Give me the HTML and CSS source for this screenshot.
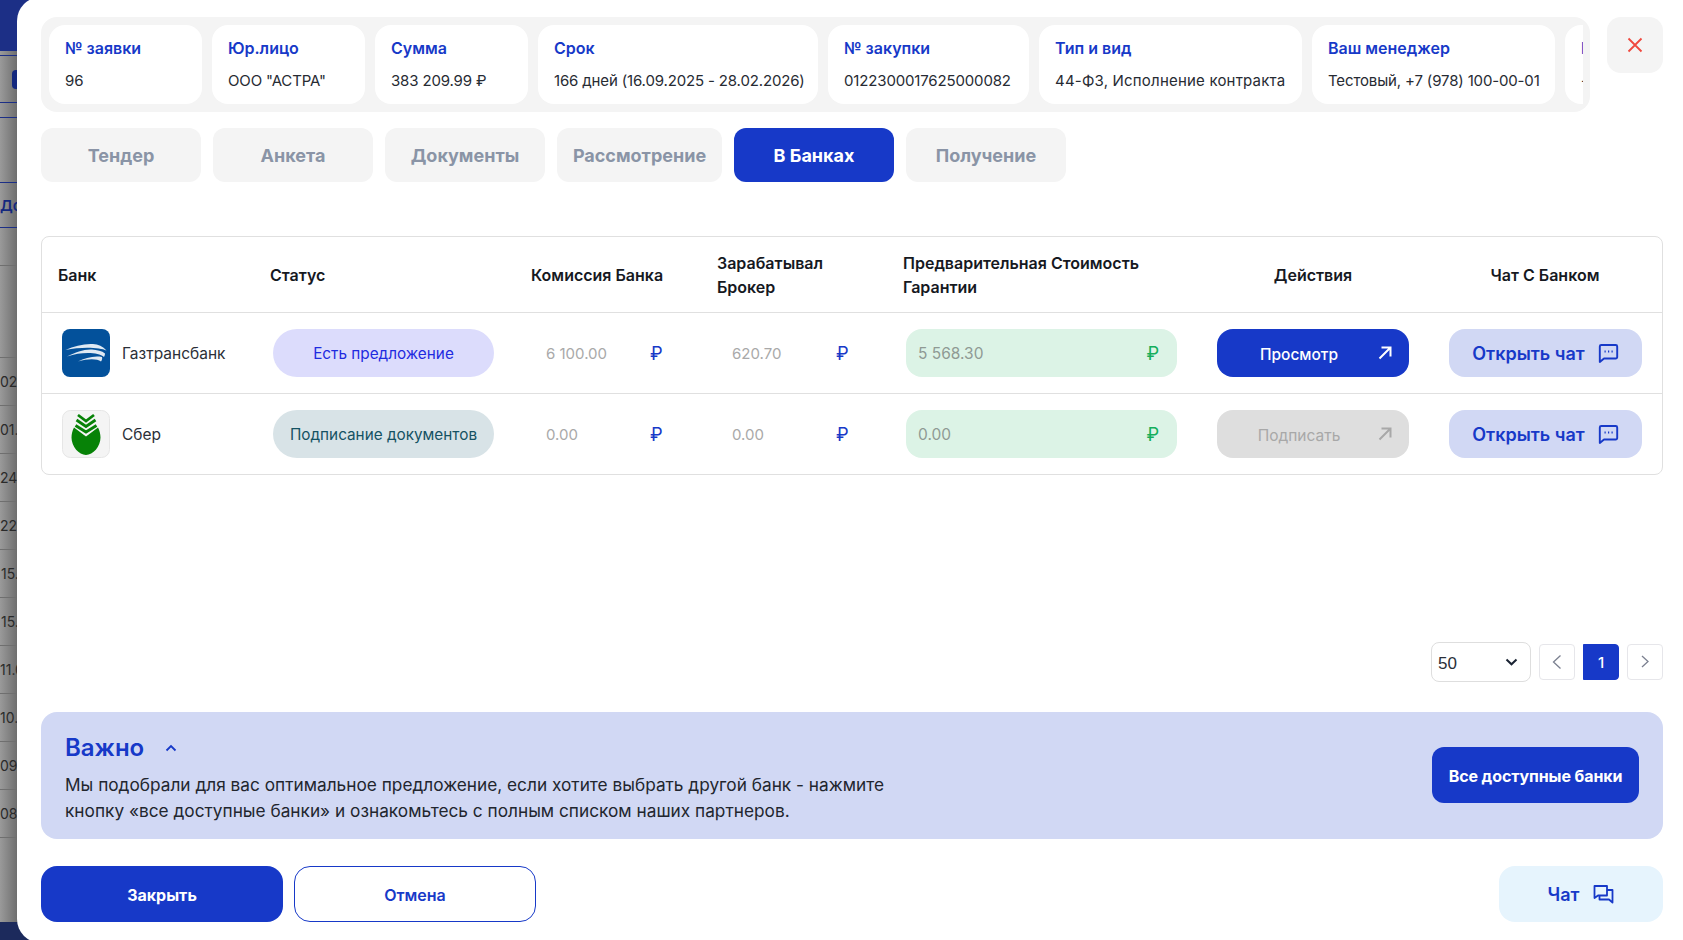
FILE: index.html
```html
<!DOCTYPE html>
<html lang="ru">
<head>
    <meta charset="UTF-8">
    <meta name="viewport" content="width=device-width, initial-scale=1.0">
    <title>Заявка 96</title>
    <link rel="stylesheet" href="styles.css">
</head>
<body>
    <!-- Page behind the modal -->
    <div class="backdrop">
        <div class="bd-top"></div>
        <div class="bd-toolbar"><span class="bd-chip"></span></div>
        <div class="bd-strip"></div>
        <div class="bd-head">До</div>
        <div class="bd-sub"></div>
        <div class="bd-spacer"></div>
        <div class="bd-row">02.</div>
        <div class="bd-row">01.1</div>
        <div class="bd-row">24.</div>
        <div class="bd-row">22.</div>
        <div class="bd-row bd-indent">15.</div>
        <div class="bd-row bd-indent">15.</div>
        <div class="bd-row">11.0</div>
        <div class="bd-row">10.</div>
        <div class="bd-row">09.</div>
        <div class="bd-row">08.</div>
        <div class="bd-rest"></div>
        <div class="bd-bottom"></div>
    </div>

    <div class="modal">
        <!-- Application info -->
        <div class="top-row">
            <div class="info-box">
                <div class="info-scroll">
                    <div class="info-card w153"><div class="info-title">№ заявки</div><div class="info-value">96</div></div>
                    <div class="info-card w153"><div class="info-title">Юр.лицо</div><div class="info-value">ООО "АСТРА"</div></div>
                    <div class="info-card w153"><div class="info-title">Сумма</div><div class="info-value">383 209.99 ₽</div></div>
                    <div class="info-card w280"><div class="info-title">Срок</div><div class="info-value">166 дней (16.09.2025 - 28.02.2026)</div></div>
                    <div class="info-card w201"><div class="info-title">№ закупки</div><div class="info-value">0122300017625000082</div></div>
                    <div class="info-card w263"><div class="info-title">Тип и вид</div><div class="info-value info-wide">44-ФЗ, Исполнение контракта</div></div>
                    <div class="info-card w243"><div class="info-title">Ваш менеджер</div><div class="info-value">Тестовый, +7 (978) 100-00-01</div></div>
                    <div class="info-card w243"><div class="info-title">Банк</div><div class="info-value">-</div></div>
                </div>
            </div>
            <button class="close-btn" aria-label="Закрыть">
                <svg width="18" height="18" viewBox="0 0 18 18" fill="none" stroke="#f0483e" stroke-width="1.8"><path d="M2.5 2.5l13 13M15.500 2.500l-13 13"/></svg>
            </button>
        </div>

        <!-- Steps -->
        <div class="tabs">
            <div class="tab">Тендер</div>
            <div class="tab">Анкета</div>
            <div class="tab">Документы</div>
            <div class="tab tab-wide">Рассмотрение</div>
            <div class="tab tab-active">В Банках</div>
            <div class="tab">Получение</div>
        </div>

        <!-- Banks table -->
        <div class="bank-table">
            <div class="t-row t-head">
                <div class="th">Банк</div>
                <div class="th">Статус</div>
                <div class="th">Комиссия Банка</div>
                <div class="th">Зарабатывал<br>Брокер</div>
                <div class="th">Предварительная Стоимость<br>Гарантии</div>
                <div class="th th-center">Действия</div>
                <div class="th th-center">Чат С Банком</div>
            </div>
            <div class="t-row">
                <div class="td-bank">
                    <svg class="logo" viewBox="0 0 48 48">
                        <rect width="48" height="48" rx="8" fill="#03519b"/>
                        <path d="M3.500 21C12 17 22 14.500 31 15C36 15.300 41 17.500 44.500 21.500C38 18.500 20 17.500 3.500 21Z" fill="#dfe9f3"/>
                        <path d="M5 27.500C14 23 22 20 30 20.500C35 20.800 40 22 43 24.500C43 26 42.500 27 42 28C36 23 20 22.500 5 27.500Z" fill="#dfe9f3"/>
                        <path d="M16 32.500C23 29 32 26.500 40 28C40.500 29.500 40 31 39 32.500C35 29.500 26 29.500 16 32.500Z" fill="#dfe9f3"/>
                    </svg>
                    <span class="bank-name">Газтрансбанк</span>
                </div>
                <div class="td-status"><span class="pill pill-offer">Есть предложение</span></div>
                <div class="td-money"><span class="money">6 100.00</span><span class="rub">₽</span></div>
                <div class="td-money"><span class="money">620.70</span><span class="rub">₽</span></div>
                <div class="td-cost"><div class="cost"><span>5 568.30</span><span class="rub-green">₽</span></div></div>
                <div class="td-action">
                    <button class="action-btn">Просмотр
                        <svg class="action-arrow" width="14" height="14" viewBox="0 0 14 14" fill="none" stroke="currentColor" stroke-width="2"><path d="M1.500 12.500L12 2M3.500 1.500H12.500V10.500"/></svg>
                    </button>
                </div>
                <div class="td-chat">
                    <button class="chat-btn">Открыть чат
                        <svg width="21" height="21" viewBox="0 0 21 21" fill="none" stroke="currentColor" stroke-width="1.900"><path d="M1.800 19V3.500a1.500 1.500 0 0 1 1.500-1.500h14.400a1.500 1.500 0 0 1 1.500 1.500v10.500a1.500 1.500 0 0 1-1.500 1.500H6Z" stroke-linejoin="round"/><path d="M6.500 8.500h1.200M10 8.500h1.200M13.500 8.500h1.200"/></svg>
                    </button>
                </div>
            </div>
            <div class="t-row t-last">
                <div class="td-bank">
                    <svg class="logo" viewBox="0 0 48 48">
                        <rect x="0.500" y="0.500" width="47" height="47" rx="8" fill="#f4f4f4" stroke="#e6e6e6"/>
                        <path d="M24 26.500L36 17.500C37.500 20.500 38.500 24 38.500 27.500C38.500 36.500 31 45 24 45C17 45 9.500 36.500 9.500 27.500C9.500 24 10.500 20.500 12 17.500Z" fill="#078207"/>
                        <path d="M16 5L24 11L32 5M14.500 10L24 16.500L33.500 10M13.500 15.500L24 22L34.500 15.500" fill="none" stroke="#078207" stroke-width="2.800"/>
                    </svg>
                    <span class="bank-name">Сбер</span>
                </div>
                <div class="td-status"><span class="pill pill-sign">Подписание документов</span></div>
                <div class="td-money"><span class="money">0.00</span><span class="rub">₽</span></div>
                <div class="td-money"><span class="money">0.00</span><span class="rub">₽</span></div>
                <div class="td-cost"><div class="cost"><span>0.00</span><span class="rub-green">₽</span></div></div>
                <div class="td-action">
                    <button class="action-btn action-off">Подписать
                        <svg class="action-arrow" width="14" height="14" viewBox="0 0 14 14" fill="none" stroke="currentColor" stroke-width="2"><path d="M1.500 12.500L12 2M3.500 1.500H12.500V10.500"/></svg>
                    </button>
                </div>
                <div class="td-chat">
                    <button class="chat-btn">Открыть чат
                        <svg width="21" height="21" viewBox="0 0 21 21" fill="none" stroke="currentColor" stroke-width="1.900"><path d="M1.800 19V3.500a1.500 1.500 0 0 1 1.500-1.500h14.400a1.500 1.500 0 0 1 1.500 1.500v10.500a1.500 1.500 0 0 1-1.500 1.500H6Z" stroke-linejoin="round"/><path d="M6.500 8.500h1.200M10 8.500h1.200M13.500 8.500h1.200"/></svg>
                    </button>
                </div>
            </div>
        </div>

        <!-- Pagination -->
        <div class="pager">
            <div class="page-size"><span class="page-size-value">50</span>
                <svg width="13" height="8" viewBox="0 0 13 8" fill="none" stroke="#1a2333" stroke-width="2"><path d="M1.500 1.500L6.500 6.300L11.500 1.500"/></svg>
            </div>
            <div class="page-btn">
                <svg width="10" height="16" viewBox="0 0 10 16" fill="none" stroke="#7b8090" stroke-width="1.300"><path d="M8.500 1.500L1.500 8L8.500 14.500"/></svg>
            </div>
            <div class="page-btn page-current">1</div>
            <div class="page-btn page-next">
                <svg width="8" height="13" viewBox="0 0 8 13" fill="none" stroke="#7b8090" stroke-width="1.300"><path d="M1 1L7 6.500L1 12"/></svg>
            </div>
        </div>

        <!-- Notice -->
        <div class="notice">
            <div>
                <div class="notice-title">Важно
                    <svg width="12" height="8" viewBox="0 0 12 8" fill="none" stroke="#1739c8" stroke-width="1.800"><path d="M1.500 6.500L6 2L10.500 6.500"/></svg>
                </div>
                <p class="notice-text">Мы подобрали для вас оптимальное предложение, если хотите выбрать другой банк - нажмите<br>кнопку «все доступные банки» и ознакомьтесь с полным списком наших партнеров.</p>
            </div>
            <button class="all-banks">Все доступные банки</button>
        </div>

        <!-- Footer -->
        <div class="footer">
            <button class="foot-btn foot-close">Закрыть</button>
            <button class="foot-btn foot-cancel">Отмена</button>
            <button class="foot-chat">Чат
                <svg width="21" height="20" viewBox="0 0 21 20" fill="none" stroke="currentColor" stroke-width="1.800" stroke-linejoin="round"><path d="M1.500 2h12.500v9.500H5L1.500 14Z"/><path d="M14 6h5.500v12.500L16 15.500H6.500v-4"/></svg>
            </button>
        </div>
    </div>
</body>
</html>
```

FILE: styles.css
```css
* {
    box-sizing: border-box;
}

html, body {
    margin: 0;
    padding: 0;
    height: 100%;
    overflow: hidden;
}

body {
    font-family: Inter, "Liberation Sans", sans-serif;
    background-color: #fff;
    color: #1a2333;
}

button {
    font-family: inherit;
    border: none;
    cursor: pointer;
}

/* Page behind the modal */
.backdrop {
    width: 60px;
    height: 940px;
    display: flex;
    flex-direction: column;
    background: linear-gradient(90deg, #9a9a9a, #6c6c6c 18px);
    color: #2a2a2a;
    font-size: 14px;
}

.bd-top {
    height: 51px;
    background-color: #1c2f86;
    flex-shrink: 0;
}

.bd-toolbar {
    height: 48px;
    margin-top: 4px;
    border-top: 1px solid #1c2f86;
    border-bottom: 1px solid #1c2f86;
    display: flex;
    align-items: center;
    flex-shrink: 0;
}

.bd-chip {
    width: 12px;
    height: 19px;
    margin-left: 12px;
    background-color: #14287e;
    border-radius: 4px;
}

.bd-strip {
    height: 65px;
    margin-top: 14px;
    border-top: 1px solid #1c2f86;
    flex-shrink: 0;
}

.bd-head {
    height: 45px;
    line-height: 46px;
    border-top: 1px solid #1c2f86;
    color: #14287e;
    font-size: 15px;
    font-weight: 600;
    flex-shrink: 0;
}

.bd-sub {
    height: 38px;
    border-top: 1px solid #1c2f86;
    flex-shrink: 0;
}

.bd-spacer {
    height: 92px;
    border-top: 1px solid #6f6f6f;
    flex-shrink: 0;
}

.bd-row {
    height: 48px;
    line-height: 48px;
    border-top: 1px solid #6f6f6f;
    flex-shrink: 0;
}

.bd-indent {
    padding-left: 1px;
}

.bd-rest {
    flex: 1;
    border-top: 1px solid #6f6f6f;
}

.bd-bottom {
    height: 18px;
    background-color: #1c2a5c;
    flex-shrink: 0;
}

/* Modal */
.modal {
    position: absolute;
    top: -3px;
    left: 17px;
    right: 0;
    height: 946px;
    background-color: #fff;
    border-radius: 24px 0 0 24px;
    padding: 20px 20px 0 24px;
    display: flex;
    flex-direction: column;
}

.top-row {
    display: flex;
    gap: 17px;
    align-items: flex-start;
}

.info-box {
    width: 1549px;
    height: 95px;
    background-color: #f4f4f4;
    border-radius: 16px;
    padding: 8px 7px 8px 8px;
}

.info-scroll {
    display: flex;
    gap: 10px;
    overflow: hidden;
    height: 79px;
}

.info-card {
    background-color: #fff;
    border-radius: 16px;
    padding: 13px 16px 14px;
    flex-shrink: 0;
    white-space: nowrap;
}

.w153 { width: 153px; }
.w201 { width: 201px; }
.w243 { width: 243px; }
.w263 { width: 263px; }
.w280 { width: 280px; }

.info-title {
    font-size: 16px;
    line-height: 20px;
    font-weight: 600;
    color: #1739c8;
}

.info-value {
    margin-top: 13px;
    font-size: 15px;
    line-height: 20px;
    color: #272b33;
    letter-spacing: -0.15px;
}

.info-wide {
    letter-spacing: 0.2px;
}

.close-btn {
    width: 56px;
    height: 56px;
    background-color: #f4f4f4;
    border-radius: 14px;
    display: flex;
    align-items: center;
    justify-content: center;
    flex-shrink: 0;
}

.tabs {
    display: flex;
    gap: 12px;
    margin-top: 16px;
}

.tab {
    width: 160px;
    height: 54px;
    background-color: #f4f4f4;
    border-radius: 12px;
    color: #8a94a6;
    font-size: 18px;
    font-weight: 700;
    display: flex;
    align-items: center;
    justify-content: center;
}

.tab-wide {
    width: 165px;
}

.tab-active {
    background-color: #1739c8;
    color: #fff;
}

/* Banks table */
.bank-table {
    margin-top: 54px;
    border: 1px solid #e0e0e0;
    border-radius: 8px;
}

.t-row {
    display: grid;
    grid-template-columns: 212px 261px 186px 186px 311px 232px 1fr;
    height: 81px;
    border-bottom: 1px solid #e0e0e0;
    align-items: center;
}

.t-head {
    height: 76px;
}

.t-last {
    height: 80px;
    border-bottom: none;
}

.th {
    padding-left: 16px;
    font-size: 16px;
    line-height: 24px;
    font-weight: 600;
    color: #16191f;
}

.th-center {
    padding-left: 0;
    padding-right: 2px;
    text-align: center;
}

.td-bank {
    display: flex;
    align-items: center;
    gap: 12px;
    padding-left: 20px;
}

.logo {
    width: 48px;
    height: 48px;
    flex-shrink: 0;
}

.bank-name {
    font-size: 15.500px;
    color: #2b2f38;
}

.td-status {
    padding-left: 19px;
}

.pill {
    display: flex;
    width: 221px;
    height: 48px;
    border-radius: 24px;
    align-items: center;
    justify-content: center;
    font-size: 15.300px;
}

.pill-offer {
    background-color: #dcdcfc;
    color: #1f2be0;
}

.pill-sign {
    background-color: #d8e3e7;
    color: #155263;
}

.td-money {
    display: flex;
    align-items: center;
    font-size: 15px;
    color: #a9a9a9;
    padding-left: 31px;
}

.money {
    width: 104px;
}

.rub {
    color: #1739c8;
    font-size: 18px;
    font-weight: 400;
}

.td-cost {
    padding-left: 19px;
}

.cost {
    width: 271px;
    height: 48px;
    border-radius: 16px;
    background-color: #dcf3e6;
    color: #8f9a94;
    font-size: 15.500px;
    display: flex;
    align-items: center;
    justify-content: space-between;
    padding: 0 18px 0 12px;
}

.rub-green {
    color: #14ae5c;
    font-size: 18px;
    font-weight: 400;
}

.td-action {
    padding-left: 19px;
}

.action-btn {
    position: relative;
    width: 192px;
    height: 48px;
    border-radius: 16px;
    background-color: #1739c8;
    color: #fff;
    font-size: 15.500px;
    font-weight: 500;
    padding: 2px 28px 0 0;
}

.action-arrow {
    position: absolute;
    right: 17px;
    top: 17px;
}

.action-off {
    background-color: #dedede;
    color: #a8a8a8;
    font-weight: 400;
}

.td-chat {
    padding-left: 19px;
}

.chat-btn {
    width: 193px;
    height: 48px;
    border-radius: 16px;
    background-color: #d1d8f4;
    color: #1739c8;
    font-size: 18px;
    font-weight: 600;
    display: flex;
    align-items: center;
    justify-content: center;
    gap: 13px;
}

/* Pagination */
.pager {
    margin-top: 167px;
    display: flex;
    justify-content: flex-end;
    align-items: center;
    gap: 8px;
    height: 40px;
}

.page-size {
    width: 100px;
    height: 40px;
    border: 1px solid #dedede;
    border-radius: 8px;
    padding: 0 12px 0 6px;
    font-size: 16px;
    color: #2b2f38;
    display: flex;
    align-items: center;
    justify-content: space-between;
    font-family: "Liberation Sans", sans-serif;
}

.page-size-value {
    padding-top: 3px;
    font-size: 17px;
}

.page-btn {
    width: 36px;
    height: 36px;
    border: 1px solid #e6e6ea;
    border-radius: 4px;
    display: flex;
    align-items: center;
    justify-content: center;
}

.page-current {
    background-color: #1739c8;
    border-color: #1739c8;
    color: #fff;
    font-size: 15px;
    font-weight: 500;
    border-radius: 0 4px 4px 0;
}

.page-next svg {
    margin-top: -2px;
}

/* Notice */
.notice {
    margin-top: 30px;
    height: 127px;
    background-color: #d1d8f4;
    border-radius: 16px;
    padding: 21px 24px 0 24px;
    display: flex;
    justify-content: space-between;
}

.notice-title {
    font-size: 24px;
    line-height: 30px;
    font-weight: 600;
    color: #1739c8;
    display: flex;
    align-items: center;
    gap: 21px;
}

.notice-text {
    margin: 9px 0 0;
    font-size: 17.250px;
    line-height: 26px;
    color: #22262e;
}

.all-banks {
    width: 207px;
    height: 56px;
    margin-top: 14px;
    padding-top: 3px;
    border-radius: 12px;
    background-color: #1739c8;
    color: #fff;
    font-size: 16px;
    font-weight: 700;
    letter-spacing: -0.1px;
}

/* Footer */
.footer {
    margin-top: 27px;
    display: flex;
    gap: 11px;
}

.foot-btn {
    width: 242px;
    height: 56px;
    padding-top: 3px;
    border-radius: 16px;
    font-size: 16px;
    font-weight: 600;
}

.foot-close {
    background-color: #1739c8;
    color: #fff;
    font-weight: 700;
}

.foot-cancel {
    background-color: #fff;
    color: #1739c8;
    border: 1px solid #1739c8;
}

.foot-chat {
    margin-left: auto;
    width: 164px;
    height: 56px;
    border-radius: 16px;
    background-color: #e6f4fd;
    color: #1739c8;
    font-size: 18px;
    font-weight: 600;
    display: flex;
    align-items: center;
    justify-content: center;
    gap: 14px;
}
```
